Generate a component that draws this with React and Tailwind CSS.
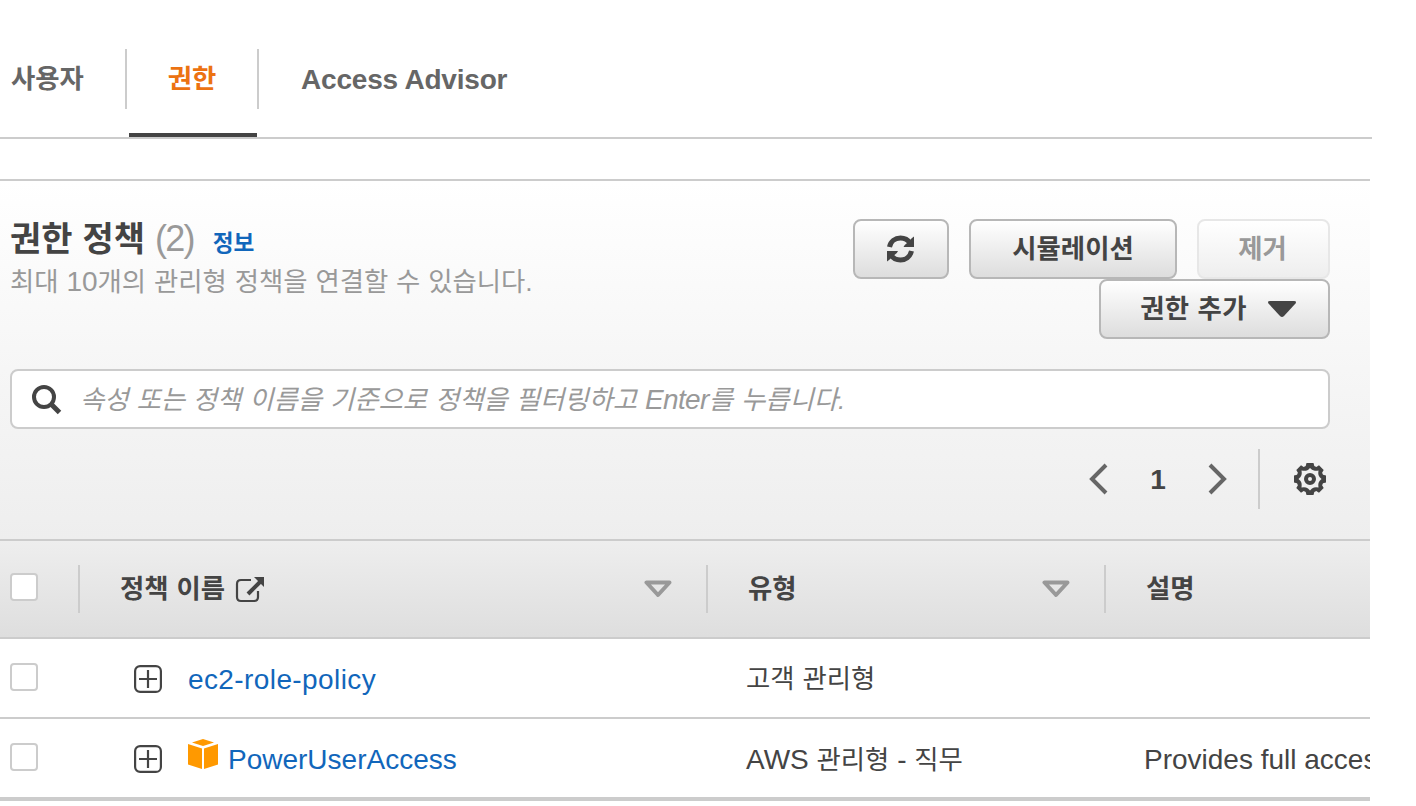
const K = ({ children, className = "" }) => (
  <span className={"text-[0.943em] [word-spacing:0.02em] " + className}>{children}</span>
);

const Box = () => <span className="block size-7 rounded border-2 border-[#cccccc] bg-white" />;

const Expand = () => (
  <svg className="size-7 shrink-0" viewBox="0 0 28 28" fill="none" stroke="#444444" strokeWidth="2.200">
    <rect x="1.100" y="1.100" width="25.800" height="25.800" rx="5" />
    <path d="M14 5v18M5 14h18" />
  </svg>
);

const Sort = () => (
  <svg className="h-[18px] w-7 shrink-0" viewBox="0 0 28 18" fill="none" stroke="#999999" strokeWidth="4" strokeLinejoin="round">
    <path d="M2.500 2.500h23L14 15z" />
  </svg>
);

const Refresh = () => (
  <svg className="h-7 w-[30px]" viewBox="0 0 30 28">
    <path d="M3.500 12C4.500 6.500 9 3 14.500 3c4.200 0 7.500 1.800 9.500 5M25.500 16c-1.500 6-6 9-11 9-4.200 0-7.500-1.800-9.500-5" fill="none" stroke="#444444" strokeWidth="5" />
    <path d="M28 1.500V12H17.500q1-2.500 3-3.500L26 3zM1 26.500V16h11q-1 2.500-3 3.500L3 25z" fill="#444444" />
  </svg>
);

const Gear = () => (
  <svg className="size-8" viewBox="0 0 32 32">
    <path
      fill="#444444"
      fillRule="evenodd"
      d="M12.500 0h7l.8 3 2 .9 2.700-1.600 4.700 4.700-1.600 2.700.9 2 3 .8v7l-3 .8-.9 2 1.600 2.700-4.700 4.700-2.700-1.600-2 .9-.8 3h-7l-.8-3-2-.9-2.700 1.600L2.300 25l1.600-2.700-.9-2-3-.8v-7l3-.8.9-2L2.300 7 7 2.300l2.700 1.600 2-.9zM16 5q-2 2.600-4 2.700T7.500 7.500Q8 10 7.500 12T4.500 16q2.600 2 3 4t0 4.500q2.500-.5 4.500 0t4 3q2-2.500 4-3t4.500 0q-.5-2.500 0-4.500t3-4q-2.500-2-3-4t0-4.500Q22 8 20 7.600T16 5z"
    />
    <circle cx="16" cy="16" r="4" fill="none" stroke="#444444" strokeWidth="4" />
  </svg>
);

const button =
  "flex h-[60px] items-center justify-center rounded-lg border-2 font-bold bg-linear-to-b from-white";
const enabled = " border-[#b7b7b7] to-[#dddddd]";
const disabled = " border-[#e7e7e7] to-[#eeeeee] text-[#999999]";

export default function App() {
  return (
    <main className="h-[806px] w-[1416px] overflow-hidden bg-white font-['Liberation_Sans','Noto_Sans_CJK_KR',sans-serif] text-[28px] leading-10 text-[#444444]">
      <nav className="flex h-[139px] w-[1372px] border-b-2 border-[#cccccc] pt-[49px] font-bold text-[#666666]">
        <div className="flex h-[60px] w-[127px] items-center border-r-2 border-[#cccccc] pl-[11px]">
          <K>사용자</K>
        </div>
        <div className="flex w-[132px] flex-col">
          <div className="flex h-[60px] items-center justify-center border-r-2 border-[#cccccc] text-[#ec7211]">
            <K>권한</K>
          </div>
          <div className="mt-6 ml-[2px] h-1 w-32 bg-[#444444]" />
        </div>
        <div className="flex h-[60px] items-center pt-[2px] pl-[42px] tracking-[-0.2px]">Access Advisor</div>
      </nav>

      <section className="mt-10 w-[1370px] overflow-hidden border-t-2 border-[#cccccc]">
        <div className="h-[358px] bg-linear-to-b from-white to-[#eeeeee] pt-[38px] pr-10 pl-[10px]">
          <div className="flex h-[150px] justify-between">
            <div>
              <h2 className="-mt-px text-[36px] leading-[42px] whitespace-nowrap">
                <K className="font-bold">권한 정책</K>{" "}
                <span className="tracking-[-1.8px] text-[#999999]">(2)</span>
                <a className="ml-[19px] text-2xl font-bold text-[#1166bb]"><K>정보</K></a>
              </h2>
              <p className="pt-[2px] text-[#999999]">
                <K>최대 </K>10<K>개의 관리형 정책을 연결할 수 있습니다.</K>
              </p>
            </div>
            <div className="flex flex-col items-end">
              <div className="flex gap-5">
                <button className={button + enabled + " w-24"}><Refresh /></button>
                <button className={button + enabled + " w-[208px]"}><K>시뮬레이션</K></button>
                <button className={button + disabled + " w-[133px] pr-[2px]"}><K>제거</K></button>
              </div>
              <button className={button + enabled + " w-[231px] gap-[21px] pl-[7px]"}>
                <K className="tracking-[0.3px]">권한 추가</K>
                <svg className="h-4 w-7" viewBox="0 0 28 16"><path d="M2 0h24q3 0 1.500 2.500L16 15q-2 2-4 0L.5 2.500Q-1 0 2 0z" fill="#444444" /></svg>
              </button>
            </div>
          </div>

          <div className="flex h-[60px] items-center rounded-lg border-2 border-[#cccccc] bg-white pl-5">
            <svg className="mt-[2px] size-[30px]" viewBox="0 0 30 30" fill="none" stroke="#444444" strokeWidth="4">
              <circle cx="12" cy="12" r="10" /><path strokeWidth="5" d="m19 19 8.500 8.500" />
            </svg>
            <p className="ml-[18px] pt-px whitespace-nowrap text-[#999999] italic">
              <K>속성 또는 정책 이름을 기준으로 정책을 필터링하고 </K>
              <span className="tracking-[-0.6px]">Enter</span>
              <K>를 누릅니다.</K>
            </p>
          </div>

          <div className="mt-5 flex h-[60px] items-center justify-end">
            <svg className="h-8 w-5" viewBox="0 0 20 32" fill="none" stroke="#666666" strokeWidth="4"><path d="M18 2 4 16l14 14" /></svg>
            <span className="w-[100px] pt-[2px] text-center font-bold">1</span>
            <svg className="h-8 w-5" viewBox="0 0 20 32" fill="none" stroke="#666666" strokeWidth="4"><path d="m2 2 14 14L2 30" /></svg>
            <div className="ml-[30px] flex h-full w-[72px] items-center justify-end border-l-2 border-[#cccccc] pr-1"><Gear /></div>
          </div>
        </div>

        <div className="flex h-[100px] items-center border-y-2 border-[#cccccc] bg-linear-to-b from-[#eeeeee] to-[#dedede] font-bold">
          <div className="flex h-12 w-20 items-center border-r-2 border-[#cccccc] pb-1 pl-[10px]"><Box /></div>
          <div className="flex h-12 w-[628px] items-center border-r-2 border-[#cccccc] pr-[34px] pl-10">
            <K>정책 이름</K>
            <svg className="mt-[2px] ml-[10px] h-7 w-[30px]" viewBox="0 0 30 28" fill="none" stroke="#444444" strokeWidth="2.200">
              <path d="M16 4H6q-4 0-4 4v13q0 4 4 4h13q4 0 4-4v-6" />
              <path d="m13 18 12-12" strokeWidth="4" />
              <path d="M19 1h10v10z" fill="#444444" stroke="none" />
            </svg>
            <span className="ml-auto"><Sort /></span>
          </div>
          <div className="flex h-12 w-[398px] items-center justify-between border-r-2 border-[#cccccc] pr-[34px] pl-10"><K>유형</K><Sort /></div>
          <div className="pl-10"><K>설명</K></div>
        </div>

        <div className="flex h-20 items-center border-b-2 border-[#cccccc] pt-[2px]">
          <div className="w-[134px] shrink-0 pb-1 pl-[10px]"><Box /></div>
          <div className="flex w-[612px] shrink-0 items-center"><Expand /><a className="ml-[26px] pt-[2px] tracking-[0.4px] text-[#1166bb]">ec2-role-policy</a></div>
          <div><K>고객 관리형</K></div>
        </div>
        <div className="flex h-[82px] items-center border-b-4 border-[#cccccc] pt-[2px]">
          <div className="w-[134px] shrink-0 pb-1 pl-[10px]"><Box /></div>
          <div className="flex w-[612px] shrink-0 items-center">
            <Expand />
            <svg className="mb-[10px] ml-[26px] size-[30px]" viewBox="0 0 30 30" fill="#ff9900">
              <path d="m15 0 11 3.500L15 7 4 3.500zM0 5l14 4.500V30L0 25.500zM30 5 16 9.500V30l14-4.500z" />
            </svg>
            <a className="ml-[10px] pt-px text-[#1166bb]">PowerUserAccess</a>
          </div>
          <div className="w-[398px] shrink-0 pt-px whitespace-nowrap">AWS <K>관리형</K> - <K>직무</K></div>
          <div className="shrink-0 pt-px whitespace-nowrap">Provides full access to AWS</div>
        </div>
      </section>
    </main>
  );
}
